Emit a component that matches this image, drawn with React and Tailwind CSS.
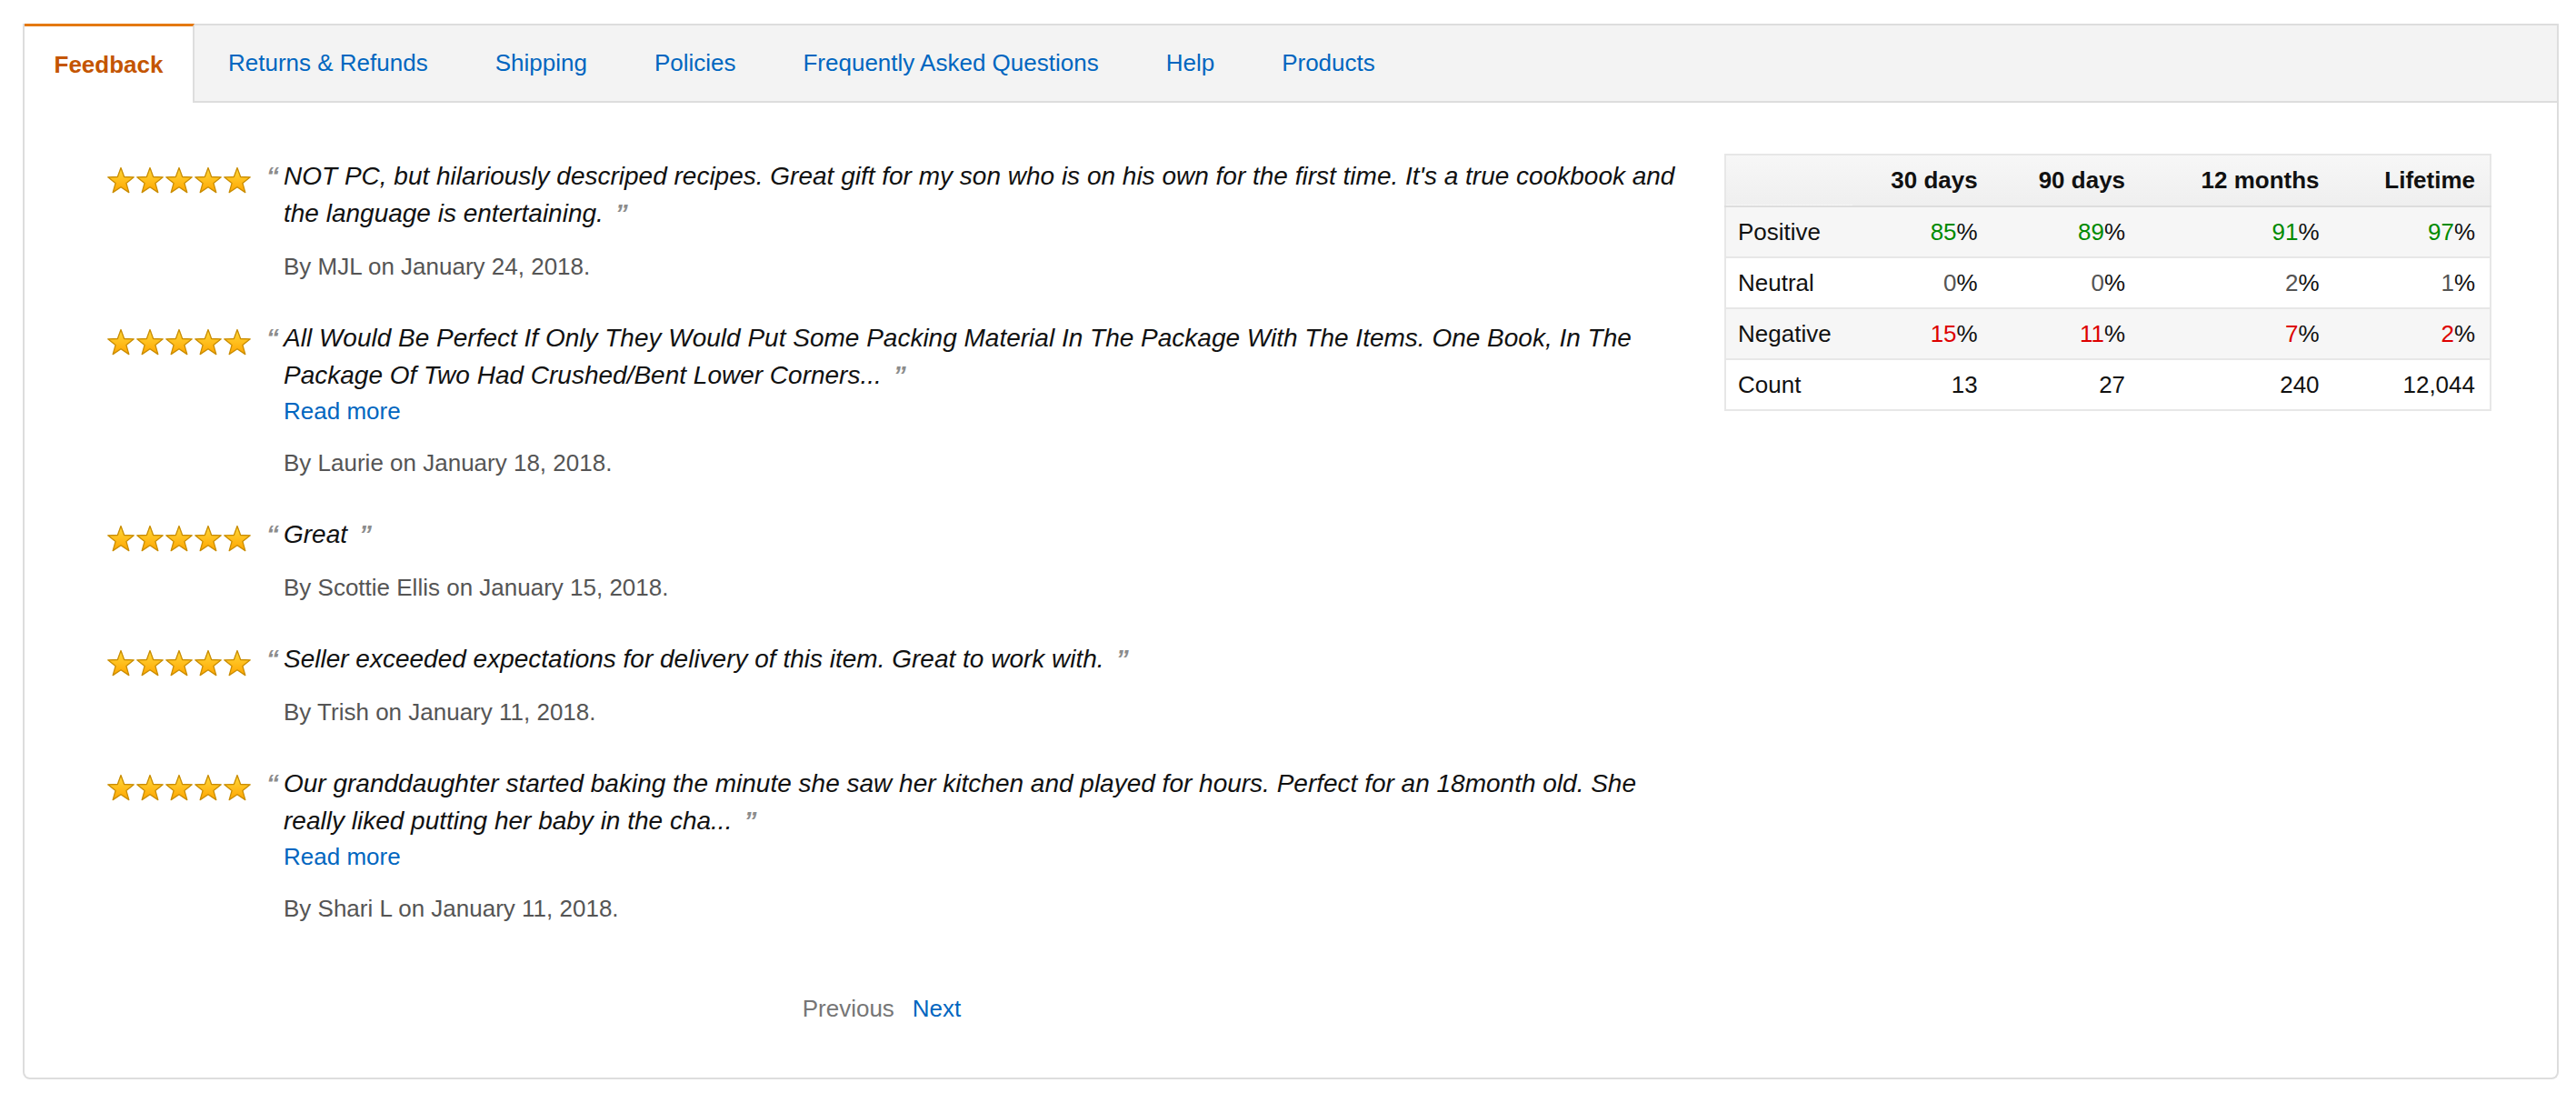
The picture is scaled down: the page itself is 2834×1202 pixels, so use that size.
const tabs = ['Returns & Refunds', 'Shipping', 'Policies', 'Frequently Asked Questions', 'Help', 'Products']

const reviews = [
    {
        text: "NOT PC, but hilariously descriped recipes. Great gift for my son who is on his own for the first time. It's a true cookbook and the language is entertaining.",
        by: 'By MJL on January 24, 2018.',
    },
    {
        text: 'All Would Be Perfect If Only They Would Put Some Packing Material In The Package With The Items. One Book, In The Package Of Two Had Crushed/Bent Lower Corners...',
        more: true,
        by: 'By Laurie on January 18, 2018.',
    },
    { text: 'Great', by: 'By Scottie Ellis on January 15, 2018.' },
    {
        text: 'Seller exceeded expectations for delivery of this item. Great to work with.',
        by: 'By Trish on January 11, 2018.',
    },
    {
        text: 'Our granddaughter started baking the minute she saw her kitchen and played for hours. Perfect for an 18month old. She really liked putting her baby in the cha...',
        more: true,
        by: 'By Shari L on January 11, 2018.',
    },
]

const rows = [
    { label: 'Positive', values: ['85', '89', '91', '97'], color: 'text-[#008a00]', striped: true },
    { label: 'Neutral', values: ['0', '0', '2', '1'], color: 'text-[#555555]' },
    { label: 'Negative', values: ['15', '11', '7', '2'], color: 'text-[#dd0000]', striped: true },
    { label: 'Count', values: ['13', '27', '240', '12,044'], plain: true },
]

const colWidths = ['w-[140px]', 'w-[153px]', 'w-[162px]', 'w-[213px]', 'w-[172px]']

const STAR = 'M16 1.5 L19.64 11.48 L30.27 11.86 L21.9 18.42 L24.82 28.64 L16 22.7 L7.18 28.64 L10.1 18.42 L1.73 11.86 L12.36 11.48 Z'

function Stars({ id }) {
    return (
        <svg width="160" height="30" viewBox="0 0 160 30" className="block">
            <defs>
                <linearGradient id={`star-${id}`} x1="0" y1="0" x2="0" y2="1">
                    <stop offset="0" stopColor="#ffd93b" />
                    <stop offset="1" stopColor="#ffa500" />
                </linearGradient>
            </defs>
            {[0, 1, 2, 3, 4].map((i) => (
                <path
                    key={i}
                    d={STAR}
                    transform={`translate(${i * 32 - 1} 0)`}
                    fill={`url(#star-${id})`}
                    stroke="#c98c00"
                    strokeWidth="1.3"
                    strokeLinejoin="round"
                />
            ))}
        </svg>
    )
}

export default function App() {
    return (
        <div className="min-h-[1202px] bg-white pt-[26px] pl-[25px] font-['Liberation_Sans',Arial,sans-serif]">
            <div className="w-[2790px] rounded-b-[8px] border-x-2 border-b-2 border-[#dddddd]">
                {/* Tabs */}
                <div className="flex h-[87px]">
                    <div className="flex w-[187px] shrink-0 items-center justify-center border-t-[3px] border-r-2 border-t-[#e47911] border-r-[#dddddd] bg-white text-[26px] font-bold text-[#c45500]">
                        Feedback
                    </div>
                    <div className="flex flex-1 items-center border-y-2 border-[#dddddd] bg-[#f3f3f3]">
                        {tabs.map((t) => (
                            <a key={t} href="#" className="px-[37px] text-[26px] text-[#0066c0]">
                                {t}
                            </a>
                        ))}
                    </div>
                </div>

                {/* Body */}
                <div className="flex pt-[60px] pr-[72px] pb-[57px] pl-[91px]">
                    <div className="w-[1740px]">
                        <div className="flex flex-col gap-[39px]">
                            {reviews.map((r, idx) => (
                                <div key={idx} className="flex">
                                    <div className="w-[160px] shrink-0 pt-[10px]">
                                        <Stars id={idx} />
                                    </div>
                                    <div className="h-[41px] w-[34px] shrink-0 pr-[5px] text-right text-[28px] font-bold italic leading-[41px] text-[#8c8c8c]">
                                        “
                                    </div>
                                    <div className="flex-1">
                                        <p className="text-[28px] italic leading-[41px] text-[#111111]">
                                            {r.text}
                                            <span className="ml-[13px] inline-block font-bold leading-none text-[#8c8c8c]">”</span>
                                        </p>
                                        {r.more && (
                                            <a href="#" className="block text-[26px] leading-[38px] text-[#0066c0]">
                                                Read more
                                            </a>
                                        )}
                                        <p className="mt-[19px] text-[26px] leading-[38px] text-[#555555]">{r.by}</p>
                                    </div>
                                </div>
                            ))}
                        </div>

                        {/* Pagination */}
                        <div className="mt-[72px] flex justify-center gap-[20px] pr-[36px] text-[26px] leading-[38px]">
                            <span className="text-[#767676]">Previous</span>
                            <a href="#" className="text-[#0066c0]">Next</a>
                        </div>
                    </div>

                    {/* Ratings table */}
                    <div className="ml-auto -mt-[4px] w-[844px]">
                        <table className="w-full table-fixed border-collapse border-2 border-[#e7e7e7] text-[26px] text-[#111111]">
                            <colgroup>
                                {colWidths.map((w, i) => (
                                    <col key={i} className={w} />
                                ))}
                            </colgroup>
                            <thead>
                                <tr className="h-[57px] border-b-2 border-[#dddddd] bg-gradient-to-b from-[#f7f7f7] to-[#efefef]">
                                    <th />
                                    {['30 days', '90 days', '12 months', 'Lifetime'].map((h) => (
                                        <th key={h} className="pr-[16px] text-right font-bold">
                                            {h}
                                        </th>
                                    ))}
                                </tr>
                            </thead>
                            <tbody>
                                {rows.map((row) => (
                                    <tr
                                        key={row.label}
                                        className={`h-[56px] border-b-2 border-[#e7e7e7] ${row.striped ? 'bg-[#f6f6f6]' : 'bg-white'}`}
                                    >
                                        <td className="pl-[13px] text-left">{row.label}</td>
                                        {row.values.map((v, i) => (
                                            <td key={i} className="pr-[16px] text-right">
                                                {row.plain ? (
                                                    v
                                                ) : (
                                                    <>
                                                        <span className={row.color}>{v}</span>%
                                                    </>
                                                )}
                                            </td>
                                        ))}
                                    </tr>
                                ))}
                            </tbody>
                        </table>
                    </div>
                </div>
            </div>
        </div>
    )
}
